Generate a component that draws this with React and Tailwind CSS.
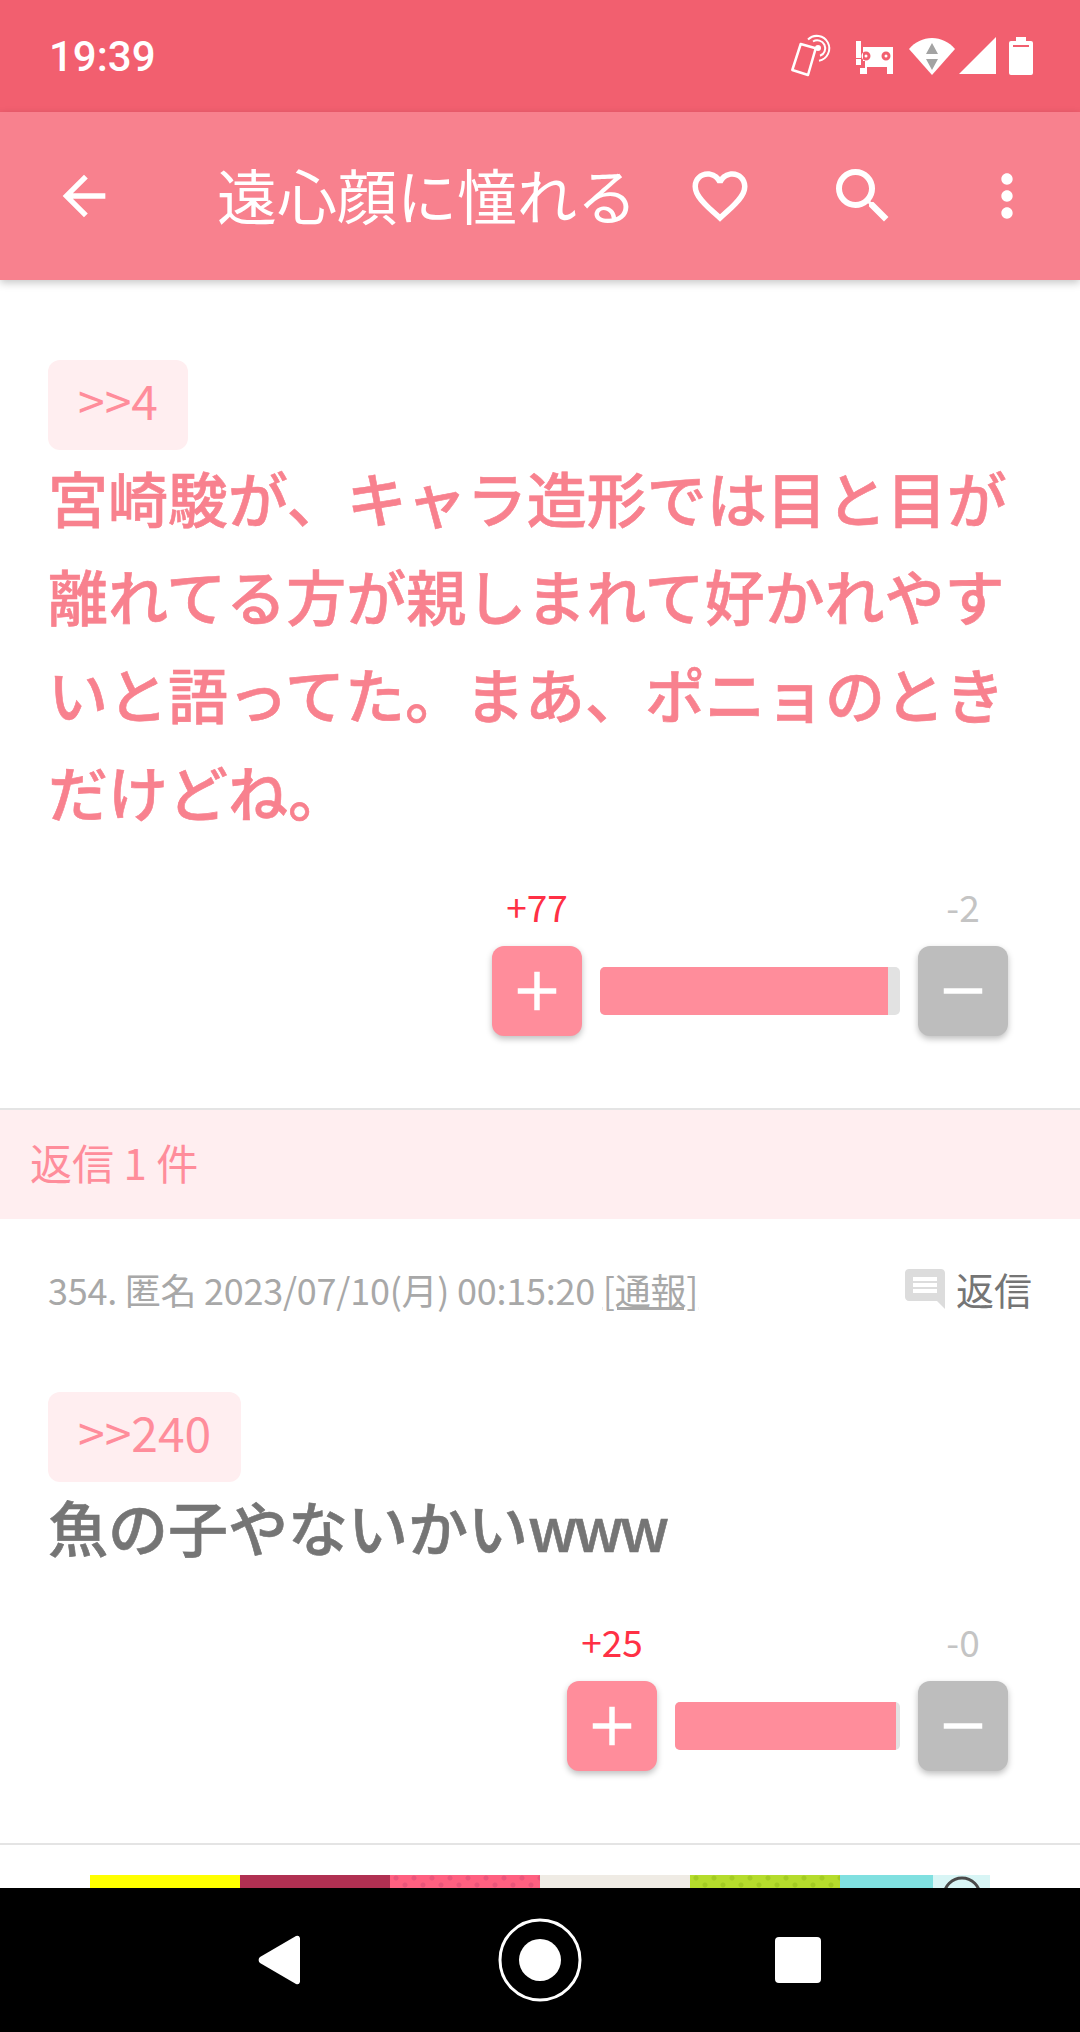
import React from "react";
import { MdArrowBack, MdFavoriteBorder, MdSearch, MdMoreVert, MdComment, MdAdd, MdRemove } from "react-icons/md";

const jp = { fontFamily: '"Noto Sans CJK JP", "Noto Sans", sans-serif' };

function StatusIcons() {
  return (
    <div className="flex items-center">
      {/* phone with nfc rings */}
      <svg width="44" height="48" viewBox="0 0 44 48" fill="none" stroke="white" className="mr-[22px] mt-[-4px]">
        <path d="M19 9.5A12.5 12.5 0 1 1 30 30.7M24 11.5A8 8 0 1 1 31 25.8" strokeWidth="2" />
        <circle cx="29" cy="18" r="3" fill="white" strokeWidth="0" />
        <path d="M11.7 14L26.7 18.3L19 45L3.3 40z" strokeWidth="2.5" strokeLinejoin="round" fill="#f25f6f" />
      </svg>
      {/* robot-like notification icon */}
      <svg width="40" height="40" viewBox="0 0 40 40" className="mr-[14px]" fill="white">
        <rect x="1" y="5" width="5" height="17" />
        <rect x="1" y="23" width="5" height="6" />
        <path fillRule="evenodd" d="M8 11H38V38H32V31H12V38H5V32H10V25H8z M11 15.5a4.5 4.5 0 1 0 0 9a4.5 4.5 0 1 0 0-9z M31 15.5a4.5 4.5 0 1 0 0 9a4.5 4.5 0 1 0 0-9z" />
        <circle cx="11" cy="20" r="1.5" />
        <circle cx="31" cy="20" r="1.5" />
      </svg>
      {/* wifi with data arrows */}
      <svg width="46" height="40" viewBox="0 0 46 40" className="mr-[4px]">
        <path d="M0 13C6 6 14 2 23 2s17 4 23 11L23 39z" fill="white" />
        <path d="M23 7l-6 11h12zM23 34l6-11H17z" fill="#a3a3a3" />
      </svg>
      {/* signal */}
      <svg width="38" height="38" viewBox="0 0 38 38" className="mr-[12px]">
        <path d="M37 0v37H0z" fill="white" />
      </svg>
      {/* battery */}
      <svg width="24" height="38" viewBox="0 0 24 38">
        <path d="M7 0h10v4h5a2 2 0 0 1 2 2v30a2 2 0 0 1-2 2H2a2 2 0 0 1-2-2V6a2 2 0 0 1 2-2h5z" fill="white" />
        <rect x="4" y="8" width="16" height="2" fill="#f25f6f" />
      </svg>
    </div>
  );
}

function Chip({ children }) {
  return (
    <div className="inline-flex h-[90px] items-center rounded-[12px] bg-[#ffeef0] px-[30px] pb-[12px] text-[48px] leading-none text-[#ff8d9b]">
      {children}
    </div>
  );
}

function Votes({ plus, minus, barClass, fillClass }) {
  return (
    <div className={`flex items-center gap-[18px] ${barClass}`}>
      <div className="flex w-[90px] flex-col items-center">
        <span className="mb-[20px] h-[40px] text-[37px] leading-[40px] text-[#ff3045]">{plus}</span>
        <button className="flex h-[90px] w-[90px] items-center justify-center rounded-[12px] bg-[#ff8d9b] shadow-[0_3px_6px_rgba(0,0,0,0.25)]">
          <MdAdd size={66} color="white" />
        </button>
      </div>
      <div className="mt-[60px] h-[48px] flex-1 overflow-hidden rounded-[5px] bg-[#e2e2e2]">
        <div className={`h-full bg-[#ff8d9b] ${fillClass}`} />
      </div>
      <div className="flex w-[90px] flex-col items-center">
        <span className="mb-[20px] h-[40px] text-[37px] leading-[40px] text-[#c4c4c4]">{minus}</span>
        <button className="flex h-[90px] w-[90px] items-center justify-center rounded-[12px] bg-[#bdbdbd] shadow-[0_3px_6px_rgba(0,0,0,0.25)]">
          <MdRemove size={66} color="white" />
        </button>
      </div>
    </div>
  );
}

export default function App() {
  return (
    <div className="flex h-[2032px] w-[1080px] flex-col overflow-hidden bg-white" style={jp}>
      <div className="flex h-[112px] items-center justify-between bg-[#f25f6f] pl-[49px] pr-[47px]">
        <span className="pt-[2px] text-[42px] font-medium leading-none text-white" style={{ fontFamily: "Roboto, sans-serif" }}>19:39</span>
        <StatusIcons />
      </div>

      <div className="z-10 flex h-[168px] items-center bg-[#f8818e] shadow-[0_3px_8px_rgba(0,0,0,0.22)]">
        <div className="flex w-[168px] justify-center">
          <MdArrowBack size={64} color="white" />
        </div>
        <div className="w-[519px] pb-[4px] pl-[49px] text-[60px] leading-none text-white">遠心顔に憧れる</div>
        <div className="flex flex-1 items-center">
          <MdFavoriteBorder size={66} color="white" />
          <MdSearch size={72} color="white" className="ml-[74px]" />
          <MdMoreVert size={68} color="white" className="ml-[74px]" />
        </div>
      </div>

      <div className="flex-1 overflow-hidden">
        <div className="border-b-2 border-[#e4e4e4] pb-[72px] pl-[48px] pr-[72px] pt-[80px]">
          <Chip>&gt;&gt;4</Chip>
          <p className="mr-[-24px] mt-[-2px] text-[60px] font-medium leading-[98px] text-[#f8818e] [-webkit-text-stroke:0.6px_#f8818e]">
            宮崎駿が、キャラ造形では目と目が離れてる方が親しまれて好かれやすいと語ってた。まあ、ポニョのときだけどね。
          </p>
          <div className="mt-[46px] flex justify-end">
            <Votes plus="+77" minus="-2" barClass="w-[516px]" fillClass="w-[96%]" />
          </div>
        </div>

        <div className="flex h-[109px] items-center bg-[#ffeef0] pb-[6px] pl-[30px] text-[42px] text-[#ff8d9b]">返信 1 件</div>

        <div className="border-b-2 border-[#e4e4e4] pb-[72px] pl-[48px] pr-[72px]">
          <div className="mr-[-24px] flex h-[173px] items-center justify-between pb-[34px]">
            <div className="text-[36px] tracking-[-0.25px] text-[#a8a8a8]">
              354. 匿名 2023/07/10(月) 00:15:20 <span className="underline">[通報]</span>
            </div>
            <div className="flex items-center gap-[7px] text-[38px] text-[#757575]">
              <MdComment size={48} color="#dcdcdc" />
              返信
            </div>
          </div>
          <Chip>&gt;&gt;240</Chip>
          <p className="mt-[-5px] text-[60px] font-medium leading-[98px] text-[#757575] [-webkit-text-stroke:0.6px_#757575]">
            魚の子やないかい<span className="tracking-[-4px]">www</span>
          </p>
          <div className="mt-[46px] flex justify-end">
            <Votes plus="+25" minus="-0" barClass="w-[441px]" fillClass="w-[98%]" />
          </div>
        </div>

        <div className="ml-[90px] mt-[30px] flex h-[40px] w-[900px]">
          <div className="w-[150px] bg-[#ffff00]" />
          <div className="w-[150px] bg-[#b03052]" />
          <div className="w-[150px] bg-[#ff6080] bg-[radial-gradient(circle,#e9557a_2px,transparent_3px),radial-gradient(circle,#e9557a_2px,transparent_3px)] bg-[length:18px_14px] bg-[position:-3px_-4px,6px_3px]" />
          <div className="w-[150px] bg-[#efebe4]" />
          <div className="w-[150px] bg-[#b5dc2c] bg-[radial-gradient(circle,#a3cb22_2px,transparent_3px),radial-gradient(circle,#a3cb22_2px,transparent_3px)] bg-[length:18px_14px] bg-[position:-3px_-4px,6px_3px]" />
          <div className="w-[93px] bg-[#80e0e0]" />
          <div className="flex w-[57px] justify-center bg-[#d8f5f5]">
            <svg width="44" height="40" viewBox="0 0 44 40" fill="none">
              <circle cx="22" cy="21" r="18" stroke="#4a4a4a" strokeWidth="3" />
            </svg>
          </div>
        </div>
      </div>

      <div className="flex h-[144px] items-center bg-black pl-[258px]">
        <svg width="42" height="50" viewBox="0 0 42 50">
          <path d="M38 1a3 3 0 0 1 4 2v44a3 3 0 0 1-4 2L2 28a4 4 0 0 1 0-6z" fill="white" />
        </svg>
        <svg width="84" height="84" viewBox="0 0 84 84" className="ml-[198px]">
          <circle cx="42" cy="42" r="40" fill="none" stroke="white" strokeWidth="3" />
          <circle cx="42" cy="42" r="21" fill="white" />
        </svg>
        <div className="ml-[193px] h-[46px] w-[46px] rounded-[4px] bg-white" />
      </div>
    </div>
  );
}
